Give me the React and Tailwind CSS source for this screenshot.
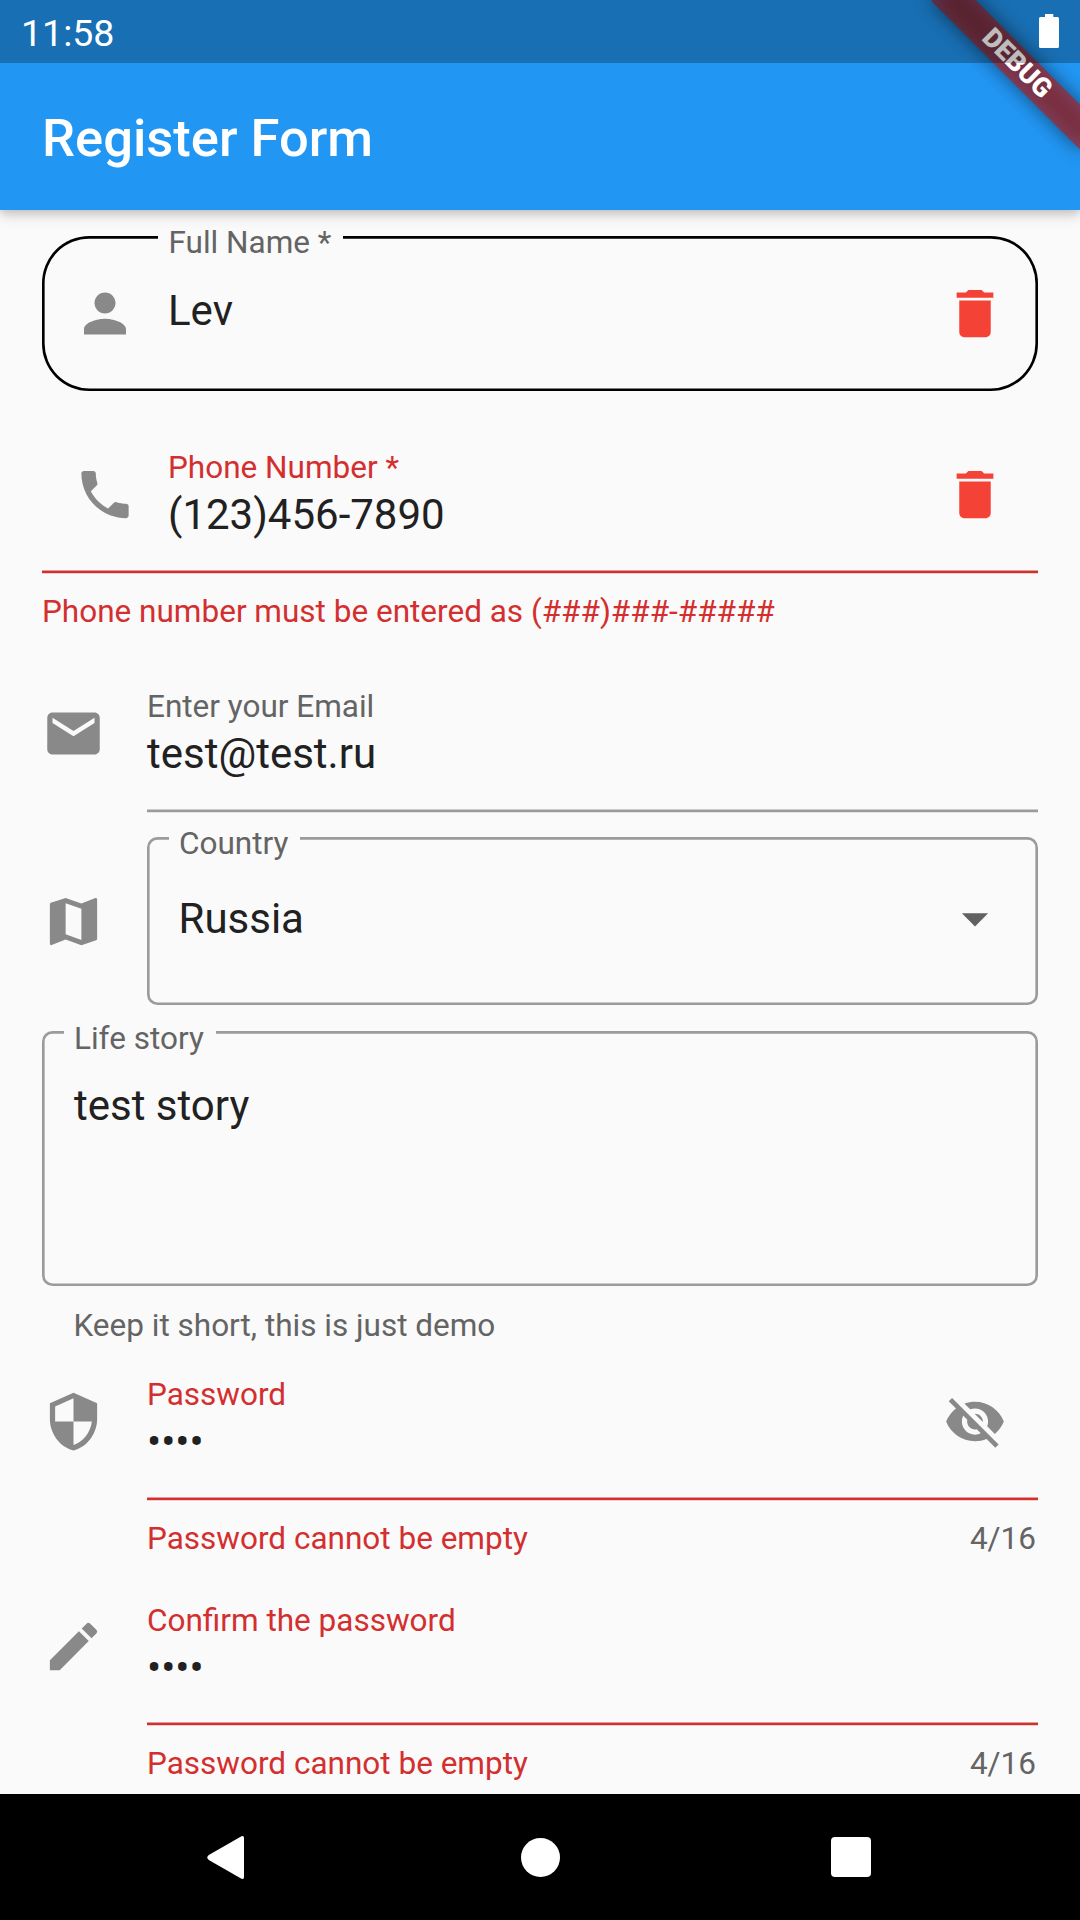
import {
  MdPerson,
  MdPhone,
  MdDelete,
  MdEmail,
  MdMap,
  MdSecurity,
  MdEdit,
  MdVisibilityOff,
  MdArrowDropDown,
} from "react-icons/md";

const LABEL = "text-[31.5px] leading-[32px] whitespace-nowrap";
const VALUE = "text-[42px] leading-[42px] text-[#212121] whitespace-nowrap";

function Icon({ as: Glyph, className }) {
  return <Glyph className={`size-[63px] shrink-0 ${className}`} />;
}

// Label that interrupts the top edge of an outlined field
function NotchLabel({ className, children }) {
  return (
    <div className={`absolute bg-[#fafafa] pr-[12px] pl-[10.5px] text-[#646464] ${LABEL} ${className}`}>
      {children}
    </div>
  );
}

function Underline({ error }) {
  return error ? (
    <div className="h-[4px] w-full bg-[linear-gradient(#e69a9a_1px,#d32f2f_1px,#d32f2f_3px,#f3cccc_3px)]" />
  ) : (
    <div className="h-[4px] w-full bg-[linear-gradient(#cbcbcb_1px,#9b9b9b_1px,#9b9b9b_3px,#e3e3e3_3px)]" />
  );
}

function PasswordField({ icon, iconClass, label, bodyClass, trailing, className }) {
  return (
    <section className={`flex ${className}`}>
      <Icon as={icon} className={`mr-[42px] text-[#898989] ${iconClass}`} />
      <div className="flex-1">
        <div className={`flex justify-between ${bodyClass}`}>
          <div>
            <div className={`${LABEL} text-[#d32f2f]`}>{label}</div>
            <div className={`mt-[10px] ${VALUE}`}>••••</div>
          </div>
          {trailing}
        </div>
        <Underline error />
        <div className="mt-[22px] flex justify-between pr-[2px]">
          <span className={`${LABEL} text-[#d32f2f]`}>Password cannot be empty</span>
          <span className={`${LABEL} text-[#646464]`}>4/16</span>
        </div>
      </div>
    </section>
  );
}

function StatusBar() {
  return (
    <div className="absolute inset-x-0 top-0 z-20 flex h-[63px] items-center justify-between bg-black/26 pr-[21px] pl-[21px] text-white">
      <span className="mt-[3px] text-[37.5px] leading-[38px]">11:58</span>
      <svg className="mb-px h-[34px] w-[20px]" viewBox="0 0 20 34" fill="currentColor">
        <path d="M6 0h8.300v3H18.500Q20 3 20 4.500V32.500Q20 34 18.500 34H1.500Q0 34 0 32.500V4.500Q0 3 1.500 3H6z" />
      </svg>
    </div>
  );
}

function DebugBanner() {
  return (
    <div className="absolute top-0 right-0 z-10 size-[210px] overflow-hidden">
      <div className="absolute top-[73.5px] left-[105px] h-[31.5px] w-[210px] origin-[50%_-73.5px] rotate-45">
        <div className="absolute inset-0 bg-black/50 blur-[9.6px]" />
        <div className="relative flex h-full items-center justify-center bg-[#b71c1c]/63 text-[26.8px] leading-none font-black text-white">
          DEBUG
        </div>
      </div>
    </div>
  );
}

export default function App() {
  return (
    <div className="relative flex h-[1920px] w-[1080px] flex-col overflow-hidden bg-[#fafafa] font-[Roboto,sans-serif]">
      <StatusBar />
      <DebugBanner />
      <header className="relative z-[5] flex h-[210px] shrink-0 items-center bg-[#2196f3] pt-[65px] pl-[42px] shadow-[0_3px_8px_rgba(0,0,0,0.14),0_6px_14px_rgba(0,0,0,0.12)]">
        <h1 className="text-[52.5px] leading-[60px] font-medium text-white">Register Form</h1>
      </header>

      <main className="flex min-h-0 flex-1 flex-col overflow-hidden px-[42px]">
        <section className="relative mt-[26px] flex h-[155px] shrink-0 items-center rounded-[47.25px] pr-[32px] pl-[31px] shadow-[inset_0_0_0_2.625px_#000]">
          <NotchLabel className="-top-[9px] left-[116px]">Full Name *</NotchLabel>
          <Icon as={MdPerson} className="translate-x-[0.5px] text-[#898989]" />
          <span className={`mb-[6px] ml-[32px] flex-1 ${VALUE}`}>Lev</span>
          <Icon as={MdDelete} className="translate-x-[0.5px] text-[#f44336]" />
        </section>

        <section className="mt-[61px] shrink-0">
          <div className="flex h-[118px] pr-[32px] pl-[31px]">
            <Icon as={MdPhone} className="mt-[11px] translate-x-[0.5px] text-[#898989]" />
            <div className="ml-[32px] flex-1">
              <div className={`${LABEL} text-[#d32f2f]`}>Phone Number *</div>
              <div className={`mt-[10px] ${VALUE}`}>(123)456-7890</div>
            </div>
            <Icon as={MdDelete} className="mt-[11px] translate-x-[0.5px] text-[#f44336]" />
          </div>
          <Underline error />
          <div className={`mt-[22px] text-[#d32f2f] ${LABEL}`}>
            Phone number must be entered as (###)###-#####
          </div>
        </section>

        <section className="mt-[63px] flex shrink-0">
          <Icon as={MdEmail} className="mt-[11px] mr-[42px] text-[#898989]" />
          <div className="flex-1">
            <div className="h-[118px]">
              <div className={`${LABEL} text-[#646464]`}>Enter your Email</div>
              <div className={`mt-[10px] ${VALUE}`}>test@test.ru</div>
            </div>
            <Underline />
          </div>
        </section>

        <section className="mt-[24px] flex shrink-0 items-center">
          <Icon as={MdMap} className="mr-[42px] text-[#898989]" />
          <div className="relative flex h-[168px] flex-1 items-center justify-between rounded-[10.5px] pr-[32px] pl-[31.5px] shadow-[inset_0_0_0_2.625px_#9b9b9b]">
            <NotchLabel className="-top-[9px] left-[21.5px]">Country</NotchLabel>
            <span className={`mb-[5px] ${VALUE}`}>Russia</span>
            <Icon as={MdArrowDropDown} className="mb-[5px] translate-x-[0.5px] text-[#616161]" />
          </div>
        </section>

        <section className="mt-[26px] shrink-0">
          <div className="relative h-[255px] rounded-[10.5px] pt-[54px] pl-[32px] shadow-[inset_0_0_0_2.625px_#9b9b9b]">
            <NotchLabel className="-top-[8px] left-[21.5px]">Life story</NotchLabel>
            <div className={VALUE}>test story</div>
          </div>
          <div className={`mt-[24px] pl-[31.5px] text-[#646464] ${LABEL}`}>Keep it short, this is just demo</div>
        </section>

        <PasswordField
          className="mt-[37px] shrink-0"
          icon={MdSecurity}
          iconClass="mt-[11px]"
          bodyClass="h-[118px]"
          label="Password"
          trailing={
            <Icon as={MdVisibilityOff} className="mt-[11px] mr-[32px] translate-x-[0.5px] text-[#898989]" />
          }
        />
        <PasswordField
          className="mt-[50px] shrink-0"
          icon={MdEdit}
          iconClass="mt-[10px]"
          bodyClass="h-[117px]"
          label="Confirm the password"
        />
      </main>

      <nav className="flex h-[126px] shrink-0 items-center justify-between bg-black pr-[209px] pl-[207px] text-white">
        <svg className="h-[43px] w-[37px]" viewBox="0 0 37 43" fill="currentColor">
          <path d="M34.500.300Q37 -.500 37 2V41Q37 43.500 34.500 42.700L1.800 24Q-1.200 21.500 1.800 19z" />
        </svg>
        <div className="ml-[5px] size-[39px] rounded-full bg-white" />
        <div className="size-[40px] rounded-[4px] bg-white" />
      </nav>
    </div>
  );
}
